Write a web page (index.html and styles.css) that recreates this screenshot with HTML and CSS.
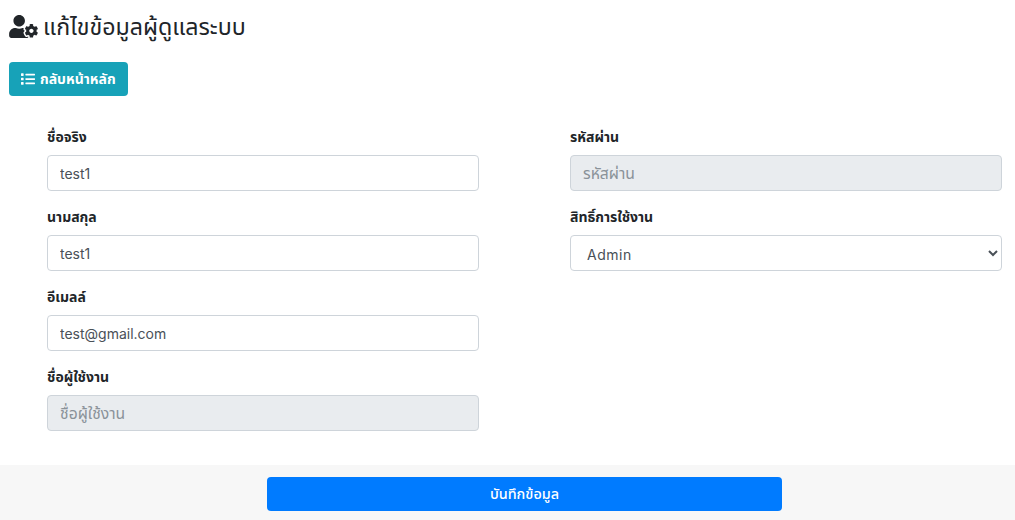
FILE: index.html
```html
<!DOCTYPE html>
<html lang="th">
<head>
<meta charset="utf-8">
<title>แก้ไขข้อมูลผู้ดูแลระบบ</title>
<link rel="stylesheet" href="styles.css">
</head>
<body>
<main class="page">
  <h1 class="title">
    <svg class="title-icon" viewBox="0 0 640 512" aria-hidden="true">
      <path fill="#212529" d="M610.5 373.3c2.6-14.1 2.6-28.5 0-42.6l25.8-14.9c3-1.700 4.300-5.200 3.300-8.500-6.700-21.600-18.200-41.200-33.200-57.400-2.300-2.500-6-3.100-9-1.400l-25.800 14.900c-10.900-9.300-23.400-16.500-36.900-21.300v-29.800c0-3.400-2.400-6.400-5.700-7.100-22.300-5-45-4.800-66.200 0-3.300.7-5.700 3.700-5.700 7.100v29.800c-13.500 4.800-26 12-36.900 21.300l-25.800-14.900c-2.900-1.700-6.700-1.100-9 1.400-15 16.200-26.500 35.800-33.200 57.400-1 3.300.4 6.800 3.300 8.500l25.800 14.900c-2.600 14.100-2.600 28.500 0 42.600l-25.800 14.900c-3 1.700-4.300 5.200-3.300 8.500 6.700 21.600 18.200 41.100 33.200 57.400 2.300 2.500 6 3.100 9 1.400l25.800-14.900c10.900 9.300 23.400 16.500 36.900 21.300v29.800c0 3.400 2.400 6.400 5.700 7.100 22.300 5 45 4.800 66.200 0 3.300-.7 5.700-3.700 5.700-7.100v-29.800c13.500-4.800 26-12 36.900-21.300l25.800 14.900c2.900 1.700 6.700 1.100 9-1.400 15-16.200 26.500-35.800 33.200-57.400 1-3.300-.4-6.800-3.300-8.500l-25.800-14.900zM496 400.500c-26.800 0-48.500-21.800-48.500-48.500s21.800-48.500 48.500-48.500 48.500 21.800 48.500 48.500-21.700 48.500-48.500 48.500zM224 256c70.700 0 128-57.300 128-128S294.700 0 224 0 96 57.300 96 128s57.300 128 128 128zm201.200 226.500c-2.300-1.200-4.600-2.600-6.800-3.900l-7.900 4.600c-6 3.400-12.800 5.300-19.600 5.300-10.900 0-21.400-4.600-28.900-12.600-18.300-19.800-32.300-43.900-40.200-69.600-5.500-17.700 1.900-36.400 17.900-45.700l7.900-4.600c-.1-2.600-.1-5.200 0-7.800l-7.900-4.600c-16-9.200-23.400-28-17.900-45.700.9-2.900 2.200-5.800 3.200-8.700-3.800-.3-7.500-1.200-11.400-1.200h-16.700c-22.200 10.200-46.900 16-72.900 16s-50.600-5.800-72.900-16h-16.700C60.200 288 0 348.200 0 422.400V464c0 26.500 21.500 48 48 48h352c10.100 0 19.500-3.200 27.200-8.500-1.200-3.800-2-7.700-2-11.800v-9.200z"/>
    </svg>
    <span>แก้ไขข้อมูลผู้ดูแลระบบ</span>
  </h1>
  <a class="btn-back" href="#">
    <svg class="list-icon" viewBox="0 0 512 512" aria-hidden="true">
      <path fill="#fff" d="M80 368H16a16 16 0 0 0-16 16v64a16 16 0 0 0 16 16h64a16 16 0 0 0 16-16v-64a16 16 0 0 0-16-16zm0-320H16A16 16 0 0 0 0 64v64a16 16 0 0 0 16 16h64a16 16 0 0 0 16-16V64a16 16 0 0 0-16-16zm0 160H16a16 16 0 0 0-16 16v64a16 16 0 0 0 16 16h64a16 16 0 0 0 16-16v-64a16 16 0 0 0-16-16zm416 176H176a16 16 0 0 0-16 16v32a16 16 0 0 0 16 16h320a16 16 0 0 0 16-16v-32a16 16 0 0 0-16-16zm0-320H176a16 16 0 0 0-16 16v32a16 16 0 0 0 16 16h320a16 16 0 0 0 16-16V80a16 16 0 0 0-16-16zm0 160H176a16 16 0 0 0-16 16v32a16 16 0 0 0 16 16h320a16 16 0 0 0 16-16v-32a16 16 0 0 0-16-16z"/>
    </svg>
    <span>กลับหน้าหลัก</span>
  </a>
  <form class="form">
    <div class="col">
      <div class="field"><label class="label">ชื่อจริง</label><input class="input" value="test1"></div>
      <div class="field"><label class="label">นามสกุล</label><input class="input" value="test1"></div>
      <div class="field"><label class="label">อีเมลล์</label><input class="input" value="test@gmail.com"></div>
      <div class="field"><label class="label">ชื่อผู้ใช้งาน</label><input class="input" placeholder="ชื่อผู้ใช้งาน" disabled></div>
    </div>
    <div class="col">
      <div class="field"><label class="label">รหัสผ่าน</label><input class="input" placeholder="รหัสผ่าน" disabled></div>
      <div class="field"><label class="label">สิทธิ์การใช้งาน</label><select class="input select"><option>Admin</option></select></div>
    </div>
  </form>
</main>
<footer class="footer">
  <button class="btn-save" type="button">บันทึกข้อมูล</button>
</footer>
</body>
</html>
```
FILE: styles.css
```css
* { box-sizing: border-box; }
html, body { margin: 0; height: 520px; overflow: hidden; }
body {
  font-family: "Noto Sans", "Noto Sans Thai", "Noto Sans CJK SC", sans-serif;
  background: #fff;
  color: #212529;
  font-size: 14px;
  display: flex;
  flex-direction: column;
}
.page { height: 465px; padding: 8px 13px 0 9px; }
.title {
  display: flex;
  align-items: center;
  gap: 5px;
  margin: 0;
  height: 36px;
  font-size: 23.200px;
  font-weight: 400;
  line-height: 36px;
}
.title-icon { flex: none; width: 29px; height: 23px; margin-top: 1px; }
.list-icon { flex: none; width: 14px; height: 14px; }
.btn-back {
  display: inline-flex;
  align-items: center;
  gap: 5px;
  width: 119px;
  height: 34px;
  margin-top: 18px;
  padding: 0 12px;
  background: #17a2b8;
  border-radius: 4px;
  color: #fff;
  font-size: 14px;
  font-weight: 700;
  text-decoration: none;
}
.form {
  display: grid;
  grid-template-columns: 432px 432px;
  column-gap: 91px;
  margin-top: 29px;
  padding-left: 38px;
}
.field { height: 80px; }
.label {
  display: block;
  height: 30px;
  font-size: 14px;
  font-weight: 700;
  line-height: 24px;
}
.input {
  display: block;
  width: 100%;
  height: 36px;
  padding: 0 12px;
  background: #fff;
  border: 1px solid #ced4da;
  border-radius: 4px;
  color: #495057;
  font-family: Inter, "Noto Sans", sans-serif;
  font-size: 14px;
}
.select { letter-spacing: .5px; padding-top: 2px; }
.input:disabled { background: #e9ecef; opacity: 1; }
.input::placeholder {
  color: #8a9299;
  opacity: 1;
  font-family: "Noto Sans", "Noto Sans Thai", sans-serif;
  font-size: 15.700px;
}
.footer {
  height: 55px;
  background: #f7f7f7;
  display: flex;
  justify-content: flex-start;
  padding: 12px 0 0 267px;
}
.btn-save {
  width: 515px;
  height: 34px;
  background: #007bff;
  border: 0;
  border-radius: 4px;
  color: #fff;
  font-family: inherit;
  font-size: 14.400px;
  font-weight: 500;
}
```
